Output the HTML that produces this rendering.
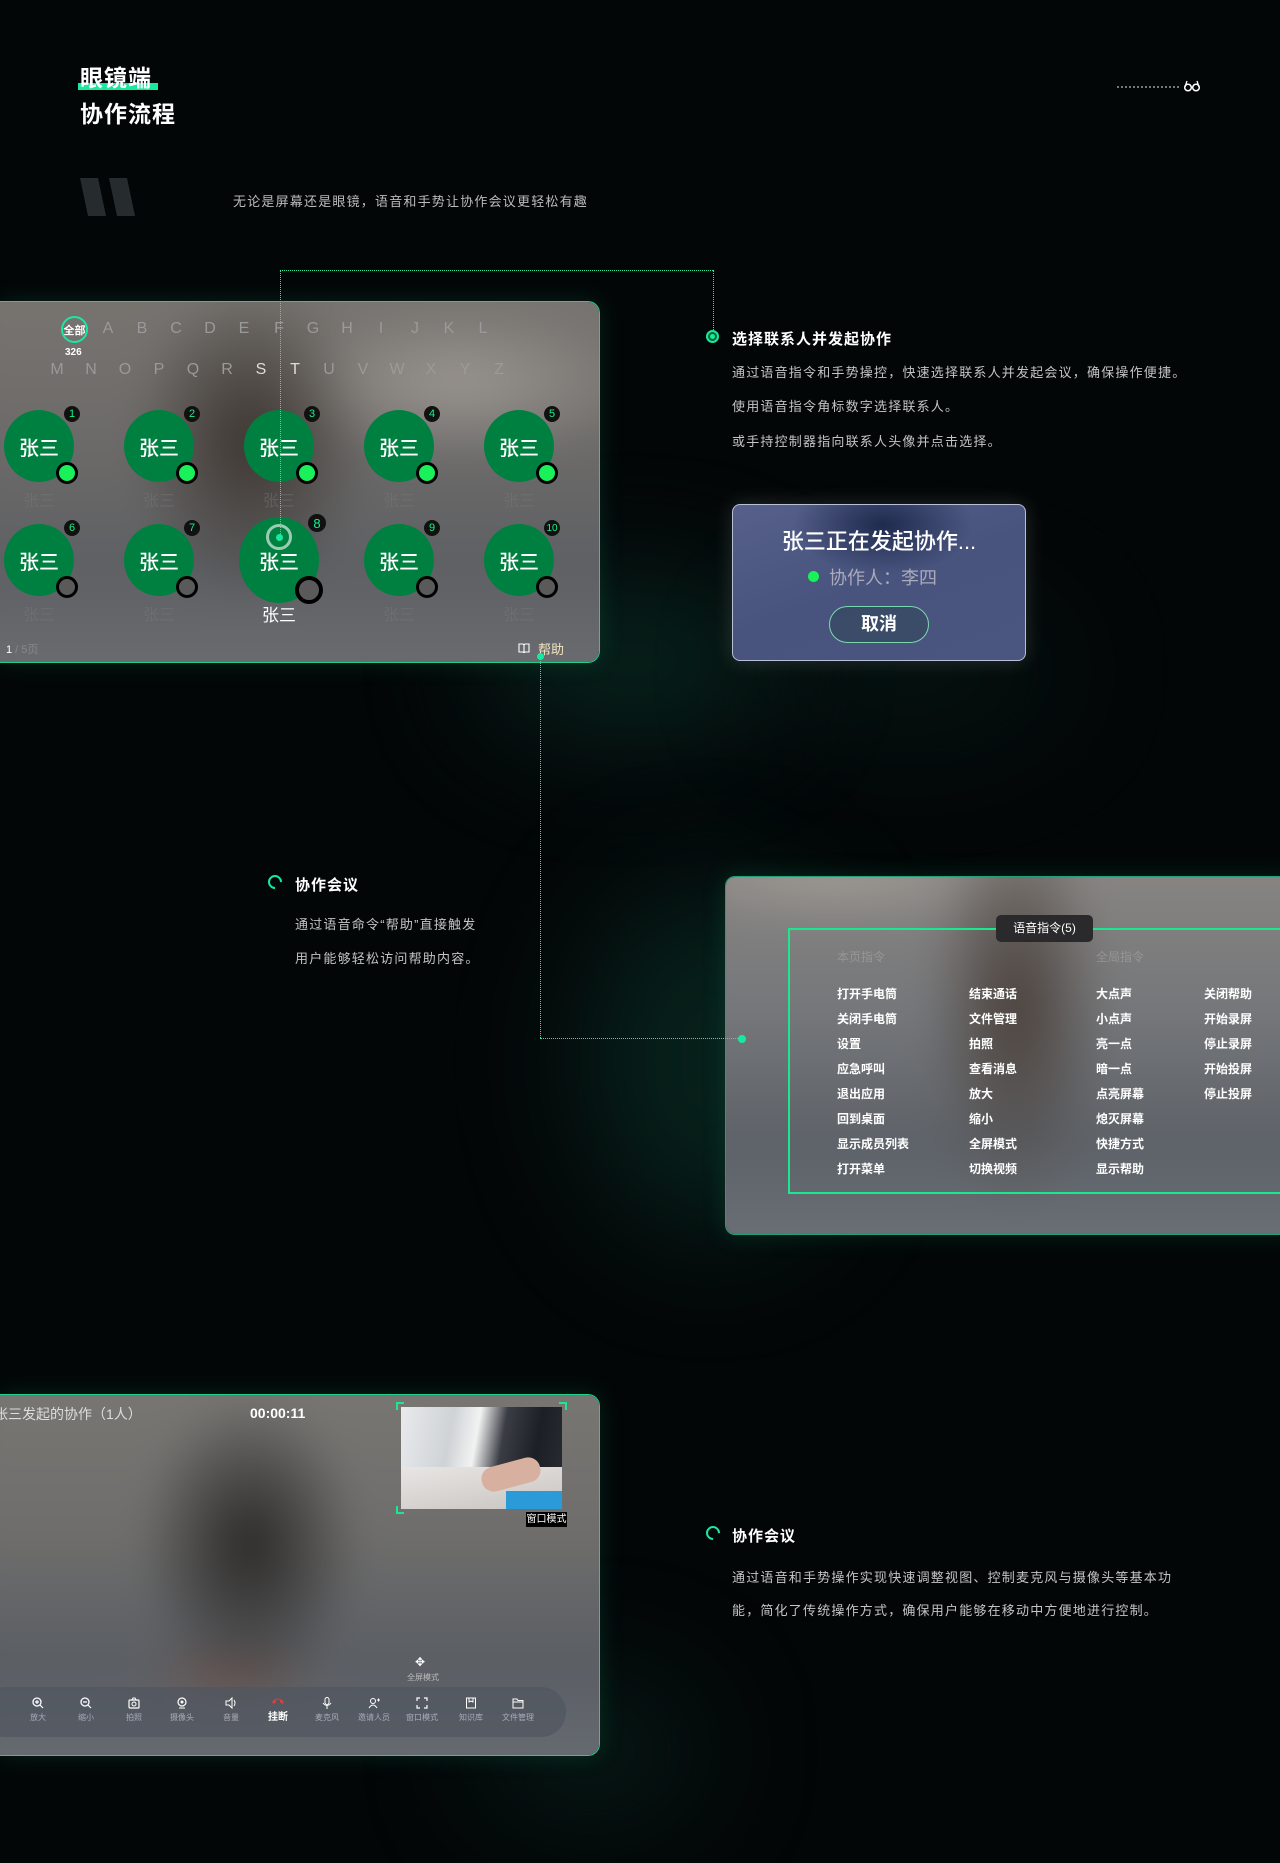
<!DOCTYPE html>
<html><head><meta charset="utf-8"><style>
*{margin:0;padding:0;box-sizing:border-box}
body{width:1280px;height:1863px;background:#030607;position:relative;overflow:hidden;font-family:"Liberation Sans","Noto Sans CJK SC",sans-serif;color:#fff}
.a{position:absolute;white-space:nowrap}
.glow{position:absolute;border-radius:50%;filter:blur(60px)}
.panel{position:absolute;overflow:hidden;border:1px solid #1fd08a;border-left:none;border-radius:0 12px 12px 0;box-shadow:0 0 24px rgba(20,160,110,.2)}
.bg{position:absolute;inset:-40px;filter:blur(18px)}
.lt{position:absolute;font-size:16px;color:#9a9a9a;transform:translateX(-50%)}
.av{position:absolute;background:#008040;border-radius:50%;display:flex;align-items:center;justify-content:center;font-size:20px;color:#fff;transform:translate(-50%,-50%);font-weight:500}
.st{position:absolute;width:22px;height:22px;border-radius:50%;border:3px solid #000;background:#19f05a;transform:translate(-50%,-50%)}
.st.g{background:#5a5a5a}
.bd{position:absolute;width:16px;height:16px;border-radius:50%;background:#111;color:#19f08a;font-size:11px;display:flex;align-items:center;justify-content:center;transform:translate(-50%,-50%)}
.nm{position:absolute;font-size:16px;color:rgba(120,120,120,.45);transform:translateX(-50%)}
.p{font-size:13px;color:#c4c4c4;letter-spacing:1.2px}
.h{font-size:15px;font-weight:bold;color:#fff;letter-spacing:1px}
.cm{position:absolute;font-size:12px;font-weight:bold;color:#fff}
.tb{position:absolute;transform:translateX(-50%);text-align:center;font-size:8px;color:#aab}
.tb svg{display:block;margin:0 auto 3px}
.dl{position:absolute;border-color:#22e8a8 !important}
</style></head><body>
<div class="glow" style="left:480px;top:580px;width:300px;height:160px;background:#0c3a2e;opacity:.55"></div>
<div class="glow" style="left:580px;top:880px;width:260px;height:360px;background:#0b3a2e;opacity:.5"></div>
<div class="glow" style="left:480px;top:1680px;width:220px;height:140px;background:#0b2f26;opacity:.5"></div>
<div class="glow" style="left:760px;top:600px;width:300px;height:140px;background:#0a2c24;opacity:.35"></div>

<!-- header -->
<div class="a" style="left:78px;top:83px;width:80px;height:7px;background:#19e8a0"></div>
<div class="a" style="left:80px;top:59px;font-size:23px;font-weight:bold;letter-spacing:1px">眼镜端</div>
<div class="a" style="left:80px;top:95px;font-size:23px;font-weight:bold;letter-spacing:1px">协作流程</div>
<svg class="a" style="left:80px;top:178px" width="58" height="40"><polygon points="0,0 18,0 26,38 8,38" fill="#262b2d"/><polygon points="29,0 47,0 55,38 37,38" fill="#262b2d"/></svg>
<div class="a p" style="left:233px;top:191px;color:#bbb">无论是屏幕还是眼镜，语音和手势让协作会议更轻松有趣</div>
<div class="a" style="left:1117px;top:86px;width:62px;border-top:2px dotted #777"></div>
<svg class="a" style="left:1184px;top:80px" width="16" height="12"><circle cx="4" cy="7.5" r="3.3" fill="none" stroke="#fff" stroke-width="1.5"/><circle cx="12" cy="7.5" r="3.3" fill="none" stroke="#fff" stroke-width="1.5"/><path d="M1 7 L3 1 M15 7 L13 1" stroke="#fff" stroke-width="1.3"/></svg>

<!-- panel 1 -->
<div class="panel" style="left:0;top:301px;width:600px;height:362px">
 <div class="bg" style="background:radial-gradient(ellipse 120px 160px at 290px 180px,#3c3530,transparent),radial-gradient(ellipse 200px 80px at 500px 120px,#9a9590,transparent),linear-gradient(180deg,#7a7672 0%,#6d6b69 40%,#5e6064 70%,#6e7075 100%)"></div>
</div>
<div class="a" style="left:61px;top:316px;width:27px;height:27px;border:2px solid #19e8a0;border-radius:50%;font-size:11px;font-weight:bold;display:flex;align-items:center;justify-content:center">全部</div>
<div class="a" style="left:65px;top:347px;font-size:10px;font-weight:bold">326</div>
<div class="lt" style="left:108px;top:320px">A</div><div class="lt" style="left:142px;top:320px">B</div><div class="lt" style="left:176px;top:320px">C</div><div class="lt" style="left:210px;top:320px">D</div><div class="lt" style="left:244px;top:320px">E</div><div class="lt" style="left:279px;top:320px">F</div><div class="lt" style="left:313px;top:320px">G</div><div class="lt" style="left:347px;top:320px">H</div><div class="lt" style="left:381px;top:320px">I</div><div class="lt" style="left:415px;top:320px">J</div><div class="lt" style="left:449px;top:320px">K</div><div class="lt" style="left:483px;top:320px">L</div>
<div class="lt" style="left:57px;top:361px">M</div><div class="lt" style="left:91px;top:361px">N</div><div class="lt" style="left:125px;top:361px">O</div><div class="lt" style="left:159px;top:361px">P</div><div class="lt" style="left:193px;top:361px">Q</div><div class="lt" style="left:227px;top:361px">R</div><div class="lt" style="left:261px;top:361px;color:#ddd">S</div><div class="lt" style="left:295px;top:361px;color:#ddd">T</div><div class="lt" style="left:329px;top:361px">U</div><div class="lt" style="left:363px;top:361px">V</div><div class="lt" style="left:397px;top:361px">W</div><div class="lt" style="left:431px;top:361px">X</div><div class="lt" style="left:465px;top:361px">Y</div><div class="lt" style="left:499px;top:361px">Z</div>

<!-- row1 -->
<div class="av" style="left:39px;top:446px;width:70px;height:72px">张三</div><div class="st" style="left:67px;top:473px"></div><div class="bd" style="left:72px;top:414px">1</div><div class="nm" style="left:39px;top:487px">张三</div>
<div class="av" style="left:159px;top:446px;width:70px;height:72px">张三</div><div class="st" style="left:187px;top:473px"></div><div class="bd" style="left:192px;top:414px">2</div><div class="nm" style="left:159px;top:487px">张三</div>
<div class="av" style="left:279px;top:446px;width:70px;height:72px">张三</div><div class="st" style="left:307px;top:473px"></div><div class="bd" style="left:312px;top:414px">3</div><div class="nm" style="left:279px;top:487px">张三</div>
<div class="av" style="left:399px;top:446px;width:70px;height:72px">张三</div><div class="st" style="left:427px;top:473px"></div><div class="bd" style="left:432px;top:414px">4</div><div class="nm" style="left:399px;top:487px">张三</div>
<div class="av" style="left:519px;top:446px;width:70px;height:72px">张三</div><div class="st" style="left:547px;top:473px"></div><div class="bd" style="left:552px;top:414px">5</div><div class="nm" style="left:519px;top:487px">张三</div>
<!-- row2 -->
<div class="av" style="left:39px;top:560px;width:70px;height:72px">张三</div><div class="st g" style="left:67px;top:587px"></div><div class="bd" style="left:72px;top:528px">6</div><div class="nm" style="left:39px;top:601px">张三</div>
<div class="av" style="left:159px;top:560px;width:70px;height:72px">张三</div><div class="st g" style="left:187px;top:587px"></div><div class="bd" style="left:192px;top:528px">7</div><div class="nm" style="left:159px;top:601px">张三</div>
<div class="av" style="left:279px;top:560px;width:80px;height:86px">张三</div><div class="st g" style="left:309px;top:590px;width:28px;height:28px;border-width:4px"></div><div class="bd" style="left:317px;top:523px;width:18px;height:18px;font-size:13px">8</div><div class="nm" style="left:279px;top:601px;color:#fff;font-size:17px">张三</div>
<div class="av" style="left:399px;top:560px;width:70px;height:72px">张三</div><div class="st g" style="left:427px;top:587px"></div><div class="bd" style="left:432px;top:528px">9</div><div class="nm" style="left:399px;top:601px">张三</div>
<div class="av" style="left:519px;top:560px;width:70px;height:72px">张三</div><div class="st g" style="left:547px;top:587px"></div><div class="bd" style="left:552px;top:528px;font-size:10px">10</div><div class="nm" style="left:519px;top:601px">张三</div>
<div class="a" style="left:266px;top:524px;width:26px;height:26px;border-radius:50%;border:3px solid rgba(255,255,255,.6)"></div>
<div class="a" style="left:276px;top:534px;width:7px;height:7px;border-radius:50%;background:#19e8a0"></div>
<div class="a" style="left:6px;top:641px;font-size:11px;color:#888"><span style="color:#fff">1</span> / 5页</div>
<svg class="a" style="left:518px;top:643px" width="12" height="10"><path d="M1 1h4l1 1 1-1h4v8H7l-1 1-1-1H1z M6 2v7" fill="none" stroke="#fff" stroke-width="1.1"/></svg>
<div class="a" style="left:538px;top:639px;font-size:13px;color:#f2e6c0">帮助</div>

<!-- section 1 text -->
<div class="a h" style="left:732px;top:328px">选择联系人并发起协作</div>
<div class="a p" style="left:732px;top:362px">通过语音指令和手势操控，快速选择联系人并发起会议，确保操作便捷。</div>
<div class="a p" style="left:732px;top:396px">使用语音指令角标数字选择联系人。</div>
<div class="a p" style="left:732px;top:431px">或手持控制器指向联系人头像并点击选择。</div>

<!-- popup -->
<div class="a" style="left:732px;top:504px;width:294px;height:157px;border-radius:8px;border:1.5px solid #b8c0d8;background:radial-gradient(ellipse 90px 50px at 150px 20px,#1f2a4e,transparent),linear-gradient(160deg,#56608a,#48547e 50%,#4a5680);box-shadow:0 0 20px rgba(255,255,255,.15)"></div>
<div class="a" style="left:732px;top:524px;width:294px;text-align:center;font-size:22px;font-weight:500">张三正在发起协作...</div>
<div class="a" style="left:808px;top:571px;width:11px;height:11px;border-radius:50%;background:#19f05a"></div>
<div class="a" style="left:829px;top:564px;font-size:18px;color:#aab">协作人：李四</div>
<div class="a" style="left:829px;top:606px;width:100px;height:37px;border-radius:19px;border:1.5px solid #7ad8b0;background:rgba(50,70,90,.6);text-align:center;line-height:34px;font-size:18px;font-weight:bold">取消</div>

<!-- section 2 text -->
<div class="a" style="left:268px;top:875px;width:14px;height:14px;border-radius:50%;border:2px solid #19e8a0;border-right-color:transparent;transform:rotate(45deg)"></div>
<div class="a h" style="left:295px;top:874px">协作会议</div>
<div class="a p" style="left:295px;top:914px">通过语音命令“帮助”直接触发</div>
<div class="a p" style="left:295px;top:948px">用户能够轻松访问帮助内容。</div>

<!-- panel 2 -->
<div class="a" style="left:725px;top:876px;width:570px;height:359px;border-radius:10px 0 0 10px;overflow:hidden;border:1px solid #1fa07a;box-shadow:0 0 24px rgba(20,160,110,.2)">
 <div class="bg" style="background:radial-gradient(ellipse 90px 200px at 330px 170px,#4a403a,transparent),radial-gradient(ellipse 200px 60px at 150px 30px,#a09a94,transparent),linear-gradient(180deg,#8c8884 0%,#75777a 40%,#5d6268 70%,#6e747a 100%)"></div>
</div>
<div class="a" style="left:788px;top:928px;width:500px;height:266px;border:2px solid #19e890;border-right:none"></div>
<div class="a" style="left:996px;top:915px;width:97px;height:27px;background:#2a2a2c;border-radius:5px;font-size:12px;text-align:center;line-height:27px">语音指令(5)</div>
<div class="cm" style="left:837px;top:948px;color:rgba(200,200,200,.35);font-weight:normal">本页指令</div>
<div class="cm" style="left:1096px;top:948px;color:rgba(200,200,200,.35);font-weight:normal">全局指令</div>
<div class="cm" style="left:837px;top:985px">打开手电筒</div><div class="cm" style="left:837px;top:1010px">关闭手电筒</div><div class="cm" style="left:837px;top:1035px">设置</div><div class="cm" style="left:837px;top:1060px">应急呼叫</div><div class="cm" style="left:837px;top:1085px">退出应用</div><div class="cm" style="left:837px;top:1110px">回到桌面</div><div class="cm" style="left:837px;top:1135px">显示成员列表</div><div class="cm" style="left:837px;top:1160px">打开菜单</div>
<div class="cm" style="left:969px;top:985px">结束通话</div><div class="cm" style="left:969px;top:1010px">文件管理</div><div class="cm" style="left:969px;top:1035px">拍照</div><div class="cm" style="left:969px;top:1060px">查看消息</div><div class="cm" style="left:969px;top:1085px">放大</div><div class="cm" style="left:969px;top:1110px">缩小</div><div class="cm" style="left:969px;top:1135px">全屏模式</div><div class="cm" style="left:969px;top:1160px">切换视频</div>
<div class="cm" style="left:1096px;top:985px">大点声</div><div class="cm" style="left:1096px;top:1010px">小点声</div><div class="cm" style="left:1096px;top:1035px">亮一点</div><div class="cm" style="left:1096px;top:1060px">暗一点</div><div class="cm" style="left:1096px;top:1085px">点亮屏幕</div><div class="cm" style="left:1096px;top:1110px">熄灭屏幕</div><div class="cm" style="left:1096px;top:1135px">快捷方式</div><div class="cm" style="left:1096px;top:1160px">显示帮助</div>
<div class="cm" style="left:1204px;top:985px">关闭帮助</div><div class="cm" style="left:1204px;top:1010px">开始录屏</div><div class="cm" style="left:1204px;top:1035px">停止录屏</div><div class="cm" style="left:1204px;top:1060px">开始投屏</div><div class="cm" style="left:1204px;top:1085px">停止投屏</div>

<!-- connectors (on top) -->
<div class="dl" style="left:280px;top:270px;height:268px;border-left:1.5px dotted"></div>
<div class="dl" style="left:280px;top:270px;width:433px;border-top:1.5px dotted"></div>
<div class="dl" style="left:713px;top:270px;height:60px;border-left:1.5px dotted"></div>
<div class="a" style="left:706px;top:330px;width:13px;height:13px;border-radius:50%;border:2px solid #19e8a0;background:#063"></div>
<div class="a" style="left:710px;top:334px;width:5px;height:5px;border-radius:50%;background:#19e8a0"></div>
<div class="dl" style="left:540px;top:656px;height:382px;border-left:1.5px dotted"></div>
<div class="a" style="left:537px;top:653px;width:7px;height:7px;border-radius:50%;background:#19e8a0"></div>
<div class="dl" style="left:540px;top:1038px;width:202px;border-top:1.5px dotted"></div>
<div class="a" style="left:738px;top:1035px;width:8px;height:8px;border-radius:50%;background:#19e8a0"></div>

<!-- panel 3 -->
<div class="panel" style="left:0;top:1394px;width:600px;height:362px">
 <div class="bg" style="background:radial-gradient(ellipse 110px 150px at 290px 190px,#2a2827,transparent),radial-gradient(ellipse 100px 40px at 270px 320px,#6a5650,transparent),linear-gradient(180deg,#7a7874 0%,#6f6e6c 40%,#5a5e64 70%,#6b7076 100%)"></div>
</div>
<div class="a" style="left:-6px;top:1404px;font-size:14px;color:#ddd">张三发起的协作（1人）</div>
<div class="a" style="left:250px;top:1405px;font-size:14px;font-weight:bold">00:00:11</div>
<div class="a" style="left:401px;top:1407px;width:161px;height:102px;overflow:hidden;background:linear-gradient(100deg,#e8eaec 0%,#cfd3d6 30%,#f2f2f2 45%,#3a3d44 60%,#1c1f26 80%,#2a2d34 100%)">
 <div style="position:absolute;left:0;top:60px;width:161px;height:42px;background:linear-gradient(170deg,#e8e6e4,#c8c4c0)"></div>
 <div style="position:absolute;left:80px;top:55px;width:60px;height:25px;background:#d8b0a0;border-radius:12px;transform:rotate(-15deg)"></div>
 <div style="position:absolute;left:105px;top:84px;width:56px;height:18px;background:#2a9ad8"></div>
</div>
<div class="a" style="left:396px;top:1402px;width:8px;height:8px;border-left:2px solid #19e890;border-top:2px solid #19e890"></div>
<div class="a" style="left:559px;top:1402px;width:8px;height:8px;border-right:2px solid #19e890;border-top:2px solid #19e890"></div>
<div class="a" style="left:396px;top:1506px;width:8px;height:8px;border-left:2px solid #19e890;border-bottom:2px solid #19e890"></div>
<div class="a" style="left:526px;top:1512px;width:41px;height:15px;background:#000;font-size:10px;line-height:15px;text-align:center">窗口模式</div>
<div class="a" style="left:415px;top:1655px;font-size:12px">✥</div>
<div class="a" style="left:407px;top:1672px;font-size:8px;color:#bbb">全屏模式</div>
<div class="a" style="left:-20px;top:1687px;width:586px;height:50px;border-radius:25px;background:rgba(80,86,96,.7)"></div>
<div class="tb" style="left:38px;top:1697px"><svg width="12" height="12"><circle cx="5" cy="5" r="4" fill="none" stroke="#fff" stroke-width="1.3"/><path d="M8 8l3 3M3 5h4M5 3v4" stroke="#fff" stroke-width="1.2"/></svg>放大</div>
<div class="tb" style="left:86px;top:1697px"><svg width="12" height="12"><circle cx="5" cy="5" r="4" fill="none" stroke="#fff" stroke-width="1.3"/><path d="M8 8l3 3M3 5h4" stroke="#fff" stroke-width="1.2"/></svg>缩小</div>
<div class="tb" style="left:134px;top:1697px"><svg width="12" height="12"><rect x="1" y="3" width="10" height="8" rx="1" fill="none" stroke="#fff" stroke-width="1.2"/><circle cx="6" cy="7" r="2" fill="none" stroke="#fff"/><path d="M4 3l1-2h2l1 2" stroke="#fff" fill="none"/></svg>拍照</div>
<div class="tb" style="left:182px;top:1697px"><svg width="12" height="12"><circle cx="6" cy="5" r="4" fill="none" stroke="#fff" stroke-width="1.2"/><circle cx="6" cy="5" r="1.5" fill="#fff"/><path d="M3 11h6" stroke="#fff"/></svg>摄像头</div>
<div class="tb" style="left:231px;top:1697px"><svg width="12" height="12"><path d="M1 4h3l3-3v10l-3-3H1z" fill="none" stroke="#fff"/><path d="M9 3q2 3 0 6" stroke="#fff" fill="none"/></svg>音量</div>
<div class="tb" style="left:278px;top:1695px;font-size:10px;color:#fff;font-weight:bold"><svg width="14" height="10"><path d="M1 7q6-7 12 0l-2 2-2-2v-2q-2-1-4 0v2l-2 2z" fill="#e83a3a"/></svg>挂断</div>
<div class="tb" style="left:327px;top:1697px"><svg width="12" height="12"><rect x="4" y="0.5" width="4" height="7" rx="2" fill="none" stroke="#fff"/><path d="M2 6q4 5 8 0M6 9v3" stroke="#fff" fill="none"/></svg>麦克风</div>
<div class="tb" style="left:374px;top:1697px"><svg width="12" height="12"><circle cx="5" cy="4" r="2.5" fill="none" stroke="#fff"/><path d="M1 11q4-6 8 0M9 3h3M10.5 1.5v3" stroke="#fff" fill="none"/></svg>邀请人员</div>
<div class="tb" style="left:422px;top:1697px"><svg width="12" height="12"><path d="M1 4V1h3M8 1h3v3M11 8v3H8M4 11H1V8" stroke="#fff" fill="none" stroke-width="1.2"/></svg>窗口模式</div>
<div class="tb" style="left:471px;top:1697px"><svg width="12" height="12"><rect x="1.5" y="1" width="9" height="10" fill="none" stroke="#fff"/><path d="M4 1v4l2-1 2 1V1" stroke="#fff" fill="none"/></svg>知识库</div>
<div class="tb" style="left:518px;top:1697px"><svg width="12" height="12"><path d="M1 2h4l1 1.5h5V11H1z M1 5h10" fill="none" stroke="#fff"/></svg>文件管理</div>

<!-- section 3 text -->
<div class="a" style="left:706px;top:1526px;width:14px;height:14px;border-radius:50%;border:2px solid #19e8a0;border-right-color:transparent;transform:rotate(45deg)"></div>
<div class="a h" style="left:732px;top:1525px">协作会议</div>
<div class="a p" style="left:732px;top:1567px">通过语音和手势操作实现快速调整视图、控制麦克风与摄像头等基本功</div>
<div class="a p" style="left:732px;top:1600px">能，简化了传统操作方式，确保用户能够在移动中方便地进行控制。</div>
</body></html>
